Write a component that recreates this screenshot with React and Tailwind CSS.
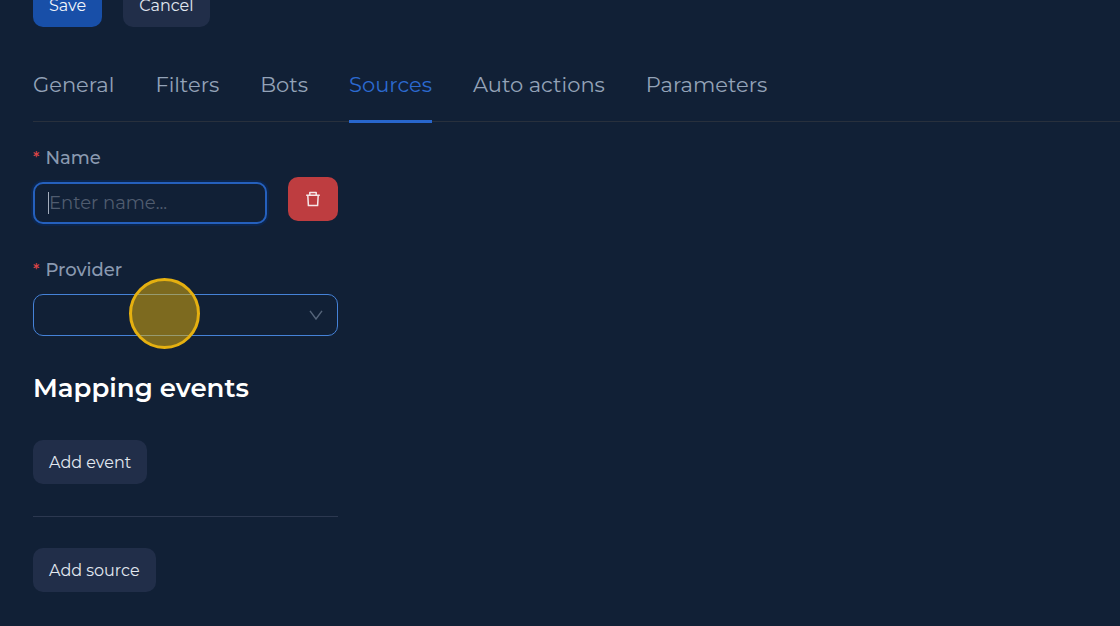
import React from "react";

const tabs = ["General", "Filters", "Bots", "Sources", "Auto actions", "Parameters"];

function Button({ primary, children }) {
  return (
    <button
      type="button"
      className={
        "h-11 shrink-0 rounded-[10px] px-4 pt-px text-[16px] leading-6 " +
        (primary ? "bg-[#184fa8] text-[#f1f5fb]" : "bg-[#212e49] text-[#e2e8f0]")
      }
    >
      {children}
    </button>
  );
}

function Label({ htmlFor, children }) {
  return (
    <label htmlFor={htmlFor} className="flex gap-[6px] text-[18px] font-medium leading-6 text-[#8a99b0]">
      <span className="text-[16px] leading-6 text-[#dc4446]">*</span>
      {children}
    </label>
  );
}

function TrashIcon() {
  return (
    <svg viewBox="0 0 16 16" className="size-4" fill="none" stroke="currentColor" strokeWidth="1.5" aria-hidden="true">
      <path d="M1.2 4.2h13.6M4.8 4V1.5h6.4V4M2.8 4.4l.6 10.2h9.2l.6-10.2" strokeLinejoin="round" />
    </svg>
  );
}

export default function App() {
  return (
    <main className="min-h-screen overflow-hidden bg-[#112036] pb-8 pl-[33px] font-['Montserrat','Inter',sans-serif]">
      <div className="flex h-[27px] items-end gap-[21px]">
        <Button primary>Save</Button>
        <Button>Cancel</Button>
      </div>

      <nav className="mt-[42px] flex gap-[41px] border-b border-[#28303d] text-[21px] leading-8">
        {tabs.map((tab) => (
          <a
            key={tab}
            href={"#" + tab.toLowerCase().replace(" ", "-")}
            className={
              "-mb-[2px] whitespace-nowrap border-b-[3px] pb-[19px] " +
              (tab === "Sources" ? "border-[#2866cc] text-[#2c6ad0]" : "border-transparent text-[#94a3b8]")
            }
          >
            {tab}
          </a>
        ))}
      </nav>

      <form className="w-[305px] pt-6">
        <Label htmlFor="name">Name</Label>
        <div className="mt-[7px] flex items-start gap-[21px]">
          <div className="relative mt-[5px] min-w-0 flex-1">
            <input
              id="name"
              type="text"
              placeholder="Enter name..."
              className="h-[42px] w-full rounded-[10px] border-2 border-[#2560bd] bg-[#112036] px-[14px] text-[18px] text-[#d5dbe6] caret-transparent shadow-[0_0_0_2px_#0c254c] outline-none placeholder:text-[#505c6f]"
            />
            <span className="absolute left-[15px] top-[10px] h-[22px] w-px bg-[#a3adbc]" />
          </div>
          <button
            type="button"
            aria-label="Delete source"
            className="flex h-11 w-[50px] items-center justify-center rounded-[10px] bg-[#be3d40] text-[#f5e6e7]"
          >
            <TrashIcon />
          </button>
        </div>

        <div className="mt-[34px]">
          <Label htmlFor="provider">Provider</Label>
          <div className="relative mt-3">
            <select
              id="provider"
              className="block h-[42px] w-full appearance-none rounded-[10px] border border-[#4582d8] bg-[#112036] px-4 text-[18px] text-[#d5dbe6] outline-none"
            >
              <option value=""></option>
            </select>
            <svg
              viewBox="0 0 14 10"
              className="pointer-events-none absolute right-[15px] top-4 h-[10px] w-[14px]"
              fill="none"
              stroke="#56657b"
              strokeWidth="1.4"
              aria-hidden="true"
            >
              <path d="M1 .8 7 9 13 .8" />
            </svg>
            <span className="pointer-events-none absolute -top-4 left-24 size-[71px] rounded-full border-[3px] border-[#e5b010] bg-[#eab308]/50" />
          </div>
        </div>

        <h2 className="mt-8 text-[26px] font-semibold leading-10 text-white">Mapping events</h2>
        <div className="mt-8 flex">
          <Button>Add event</Button>
        </div>
        <hr className="mt-8 border-[#2c3850]" />
        <div className="mt-[31px] flex">
          <Button>Add source</Button>
        </div>
      </form>
    </main>
  );
}
